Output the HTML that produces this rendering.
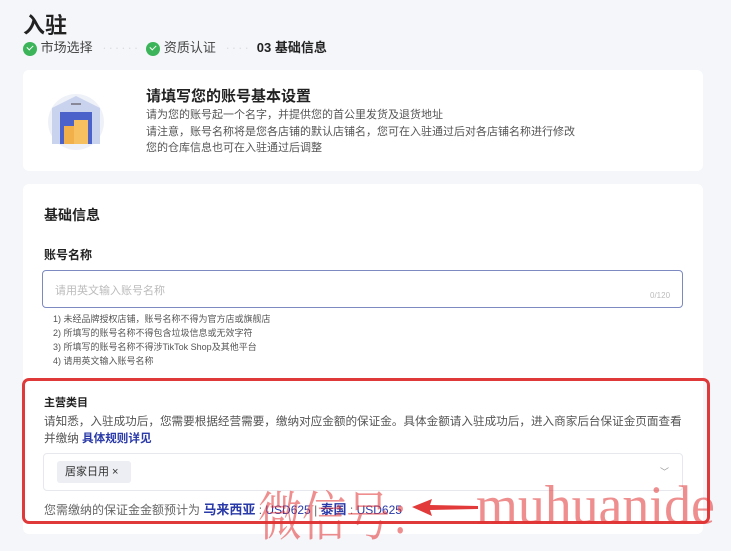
<!DOCTYPE html>
<html><head><meta charset="utf-8"><style>
*{margin:0;padding:0;box-sizing:border-box}
body{width:731px;height:550px;background:#f4f6fa;font-family:"Liberation Sans","Noto Sans CJK SC",sans-serif;color:#222;position:relative;overflow:hidden}
.abs{position:absolute}
.card{position:absolute;background:#fff;border-radius:6px}
.chk{display:inline-block;width:14px;height:14px;border-radius:50%;background:#3cb55a;vertical-align:middle;position:relative}
.chk:after{content:"";position:absolute;left:4px;top:3px;width:5px;height:3px;border-left:1.5px solid #fff;border-bottom:1.5px solid #fff;transform:rotate(-45deg)}
</style></head><body>
<div class="abs" style="left:23px;top:8px;font-size:22px;font-weight:bold">入驻</div>
<div class="abs" style="left:23px;top:37px;font-size:13px;color:#444;white-space:nowrap">
<span class="chk"></span> 市场选择 <span style="color:#ddd;letter-spacing:2px;margin:0 6px">······</span><span class="chk"></span> 资质认证 <span style="color:#ddd;letter-spacing:2px;margin:0 6px">····</span><b style="color:#222">03 基础信息</b></div>
<div class="card" style="left:23px;top:70px;width:680px;height:101px"></div>
<svg class="abs" style="left:44px;top:90px" width="70" height="60"><circle cx="32" cy="32" r="28" fill="#eef1f8"/><path d="M8 18 L32 6 L56 18 L56 54 L8 54Z" fill="#c9d3ee"/><rect x="16" y="22" width="32" height="32" fill="#4a62c9"/><rect x="20" y="36" width="14" height="18" fill="#f2b04a"/><rect x="30" y="30" width="14" height="24" fill="#f6c060"/><rect x="27" y="13" width="10" height="2" fill="#889"/></svg>
<div class="abs" style="left:146px;top:85px;font-size:15px;font-weight:bold">请填写您的账号基本设置</div>
<div class="abs" style="left:146px;top:107px;font-size:11px;color:#555;line-height:16.5px">请为您的账号起一个名字，并提供您的首公里发货及退货地址<br>请注意，账号名称将是您各店铺的默认店铺名，您可在入驻通过后对各店铺名称进行修改<br>您的仓库信息也可在入驻通过后调整</div>
<div class="card" style="left:23px;top:184px;width:680px;height:350px"></div>
<div class="abs" style="left:44px;top:205px;font-size:14px;font-weight:bold">基础信息</div>
<div class="abs" style="left:44px;top:246px;font-size:12px;font-weight:bold">账号名称</div>
<div class="abs" style="left:42px;top:270px;width:641px;height:38px;border:1px solid #7d8ac2;border-radius:4px"></div>
<div class="abs" style="left:55px;top:282px;font-size:11px;color:#bbb">请用英文输入账号名称</div>
<div class="abs" style="left:650px;top:291px;font-size:8px;color:#bbb">0/120</div>
<div class="abs" style="left:53px;top:312px;font-size:9px;color:#555;line-height:14px">1) 未经品牌授权店铺，账号名称不得为官方店或旗舰店<br>2) 所填写的账号名称不得包含垃圾信息或无效字符<br>3) 所填写的账号名称不得涉TikTok Shop及其他平台<br>4) 请用英文输入账号名称</div>
<div class="abs" style="left:22px;top:378px;width:688px;height:146px;border:3px solid #e0393a;border-radius:7px"></div>
<div class="abs" style="left:44px;top:394px;font-size:11px;font-weight:bold">主营类目</div>
<div class="abs" style="left:44px;top:413px;font-size:11.6px;color:#555;line-height:17px;width:650px">请知悉，入驻成功后，您需要根据经营需要，缴纳对应金额的保证金。具体金额请入驻成功后，进入商家后台保证金页面查看<br>并缴纳 <b style="color:#2a3aa8">具体规则详见</b></div>
<div class="abs" style="left:43px;top:453px;width:640px;height:38px;border:1px solid #e6e8ee;border-radius:4px"></div>
<div class="abs" style="left:57px;top:461px;width:74px;height:22px;background:#eceef3;border-radius:3px;font-size:11px;color:#333;line-height:22px;padding-left:8px">居家日用 ×</div>
<div class="abs" style="left:660px;top:465px;font-size:9px;color:#999">﹀</div>
<div class="abs" style="left:44px;top:499px;font-size:12px;color:#666;white-space:nowrap">您需缴纳的保证金金额预计为 <b style="color:#2a3aa8;font-size:13px">马来西亚</b> : <span style="color:#2a3aa8">USD625</span> | <b style="color:#2a3aa8;font-size:13px">泰国</b> : <span style="color:#2a3aa8">USD625</span></div>
<div class="abs" style="left:258px;top:474px;font-family:'Liberation Serif','Noto Serif CJK SC',serif;font-size:44px;color:rgba(225,50,50,0.55);white-space:nowrap;transform:scaleY(1.2);transform-origin:0 0">微信号：</div>
<div class="abs" style="left:476px;top:474px;font-family:'Liberation Serif',serif;font-size:48px;color:rgba(225,50,50,0.55);white-space:nowrap;transform:scale(1.12,1.15);transform-origin:0 0">muhuanide</div>
<svg class="abs" style="left:410px;top:496px" width="70" height="22"><path d="M2 11 L22 3 L20 9 L68 10 L68 13 L20 14 L22 20Z" fill="#e23a3a"/></svg>
</body></html>
